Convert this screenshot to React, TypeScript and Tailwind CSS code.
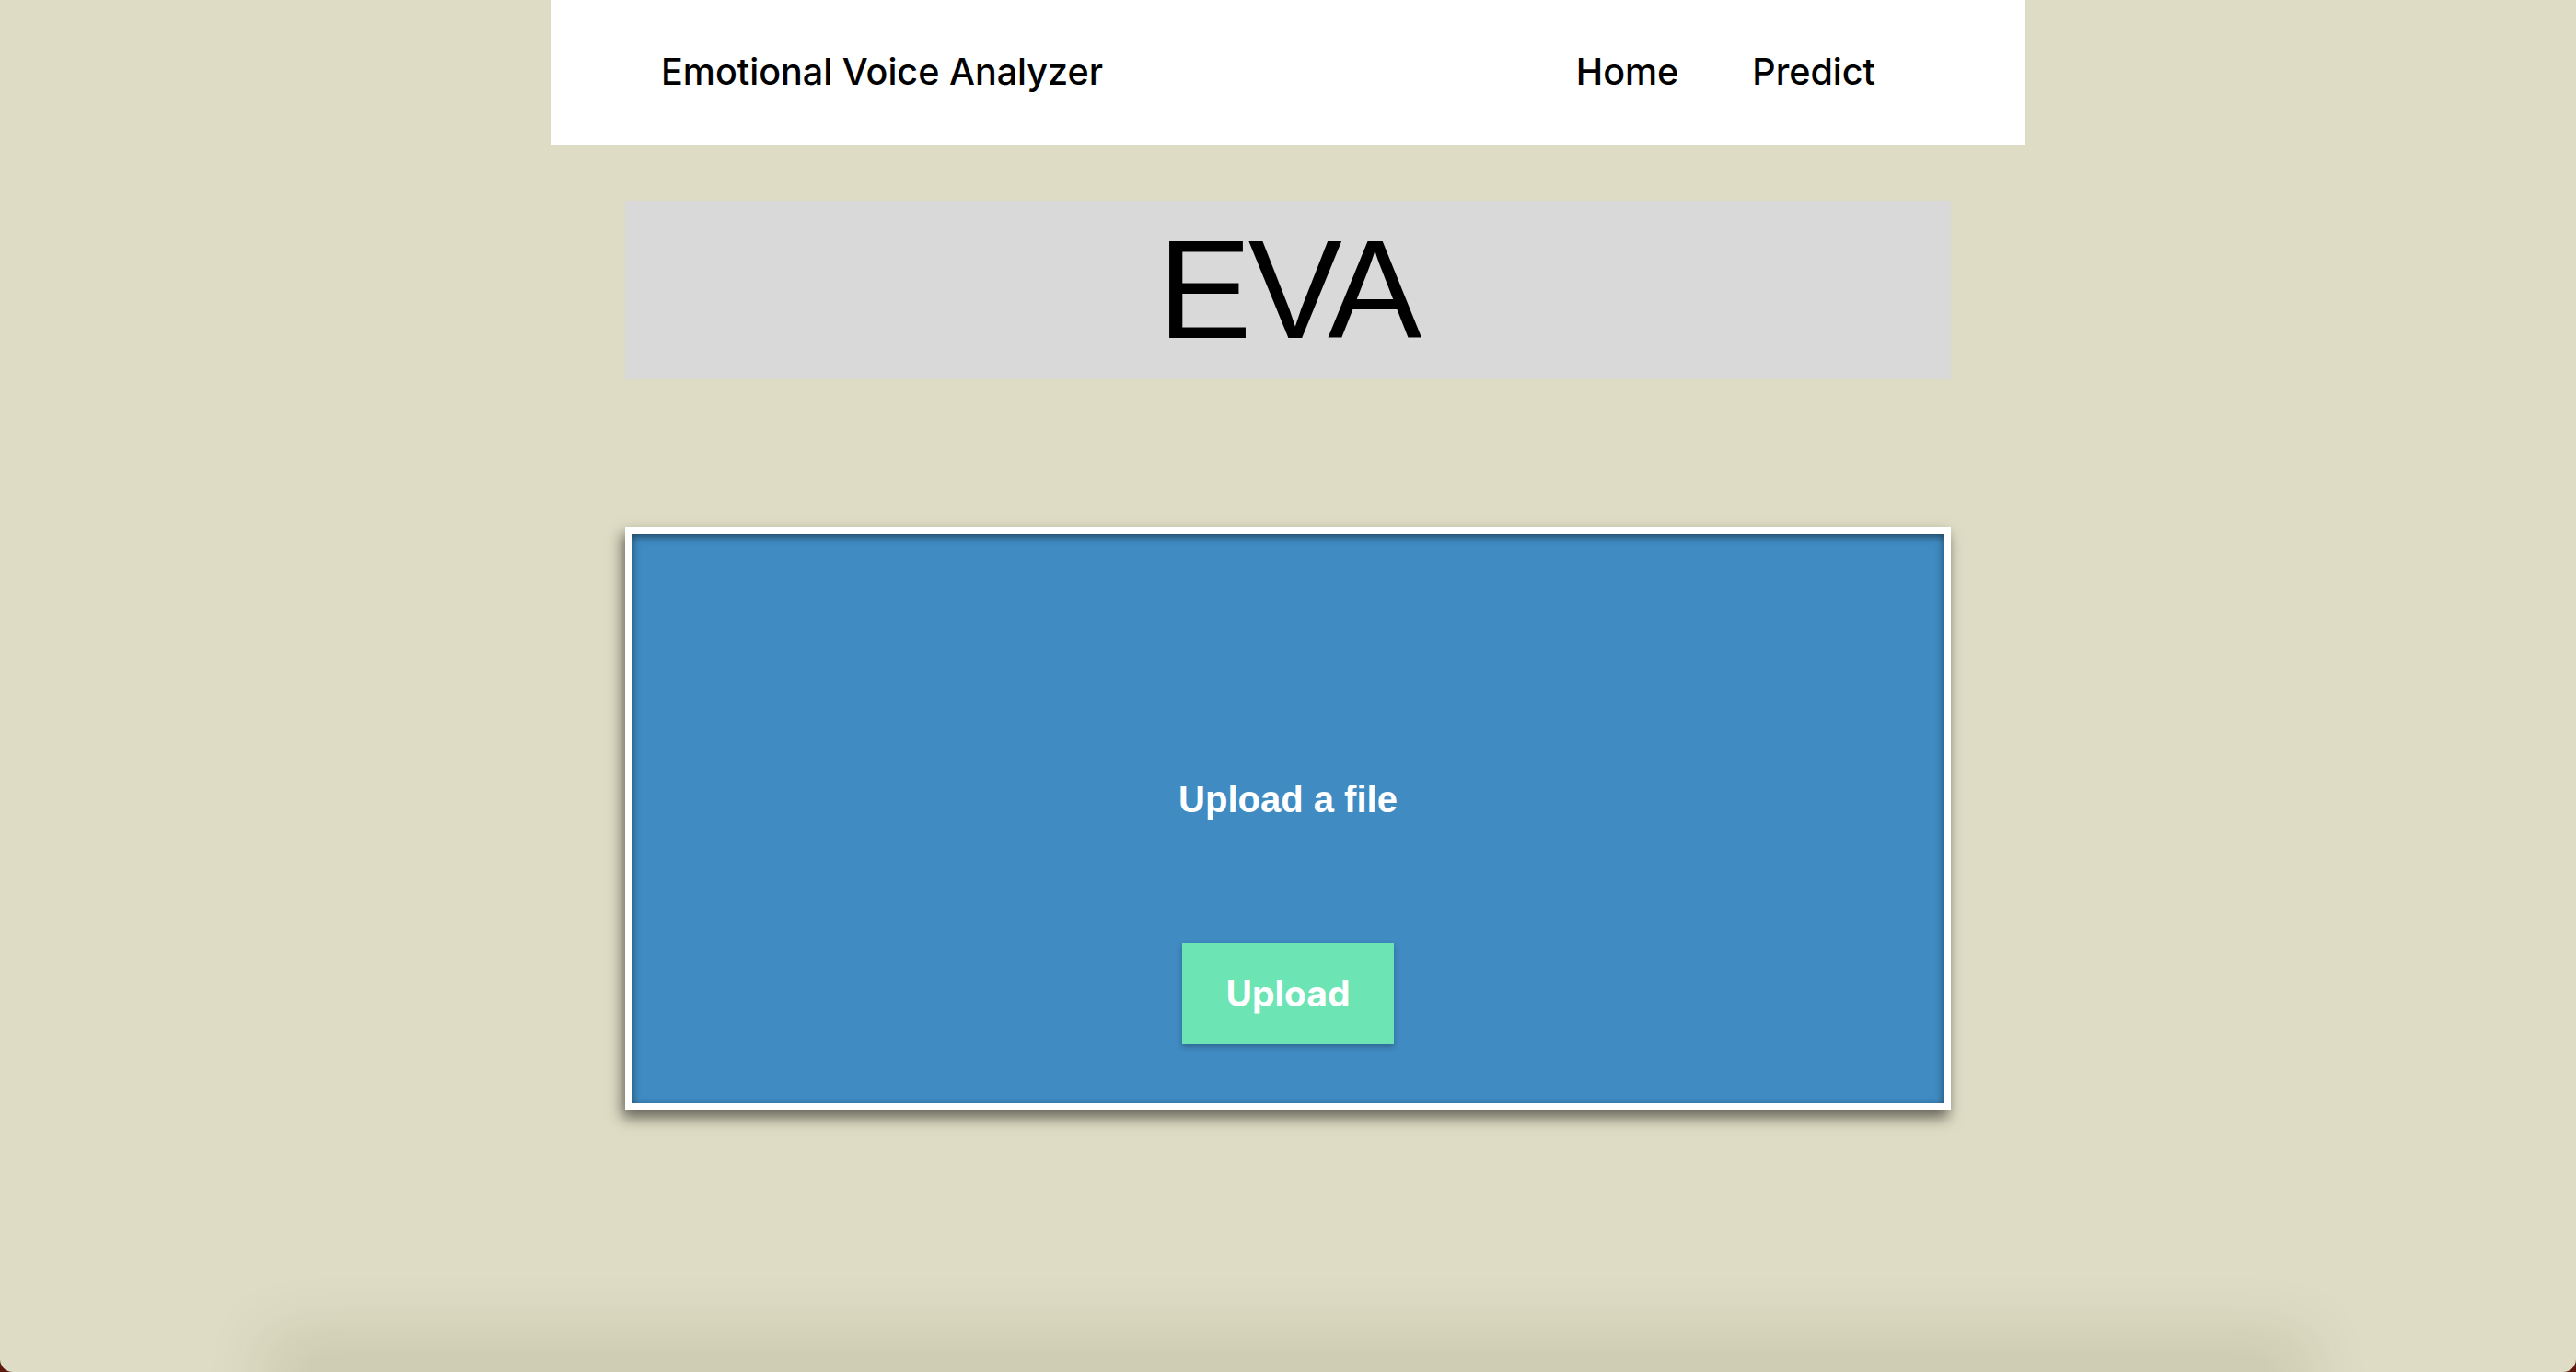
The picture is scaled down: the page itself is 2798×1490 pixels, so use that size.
export default function App() {
  return (
    <div className="bg-[#5b1a0c]">
      <div className="relative flex h-[1490px] flex-col overflow-hidden rounded-b-[14px] bg-[#dedcc4]">
        {/* Top navigation */}
        <header className="mx-auto flex h-[157px] w-[1600px] shrink-0 items-center justify-between bg-white pl-[119px] pr-[162px] font-['Inter',sans-serif] text-[39.5px] font-medium text-black">
          <span>Emotional Voice Analyzer</span>
          <nav className="flex gap-[80px]">
            <a href="#">Home</a>
            <a href="#">Predict</a>
          </nav>
        </header>

        {/* Title */}
        <div className="mx-auto mt-[61px] flex h-[194px] w-[1440px] items-center justify-center bg-[#d9d9d9]">
          <h1 className="-mt-[3px] font-['Liberation_Sans',Arial,sans-serif] text-[153px] leading-none tracking-[-4px] text-black">
            EVA
          </h1>
        </div>

        {/* Upload card */}
        <div className="mx-auto mt-[160px] w-[1440px] border-[8px] border-white shadow-[-3px_8px_14px_rgba(0,0,0,0.55)]">
          <div className="flex h-[618px] flex-col items-center bg-[#3f8bc2] pt-[268px] shadow-[inset_0_3px_8px_rgba(0,0,0,0.5)]">
            <p className="font-['Liberation_Sans',Arial,sans-serif] text-[40px] font-bold leading-none text-white">
              Upload a file
            </p>
            <button className="mt-[136px] h-[110px] w-[230px] bg-[#6ce4b4] font-['Inter',sans-serif] text-[39px] font-bold text-white shadow-[0_3px_6px_rgba(0,0,0,0.25)]">
              Upload
            </button>
          </div>
        </div>

        <div className="flex-1" />
        {/* footer edge just below the fold */}
        <div className="mx-[330px] h-0 shrink-0 shadow-[0_0_70px_40px_rgba(60,60,20,0.12)]" />
      </div>
    </div>
  )
}
